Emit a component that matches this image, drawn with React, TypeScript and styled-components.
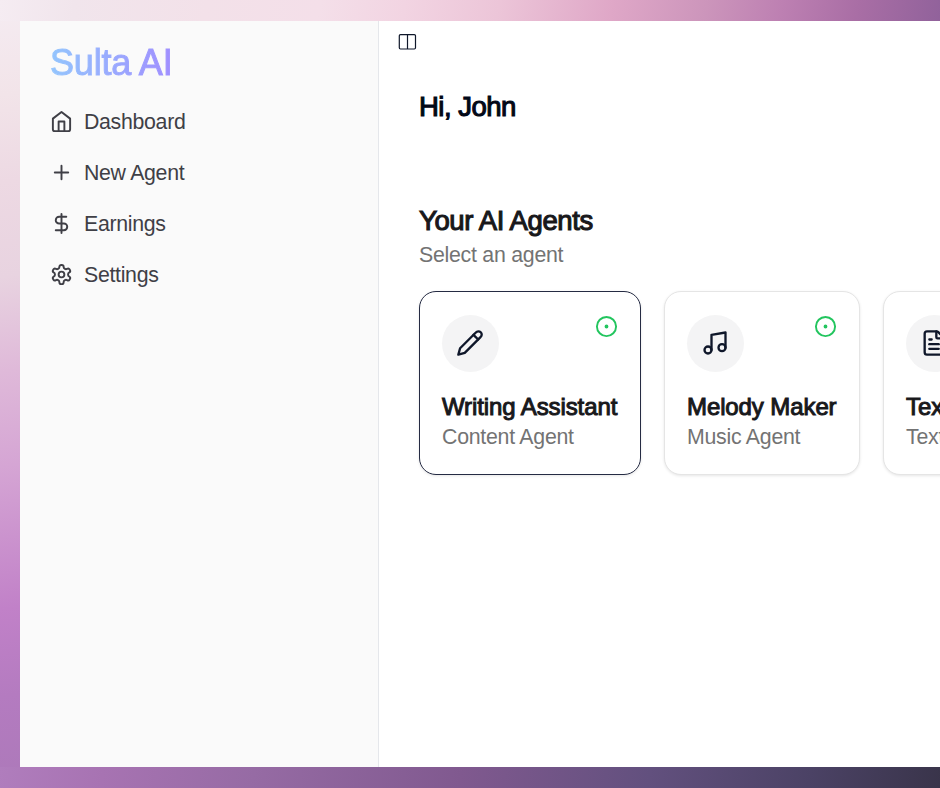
import React from "react";
import styled, { createGlobalStyle } from "styled-components";
import { Plus, DollarSign, Music, FileText, CircleDot } from "lucide-react";

const GlobalStyle = createGlobalStyle`
  * { box-sizing: border-box; }
  html, body { margin: 0; overflow: hidden; }
  body { font-family: "Liberation Sans", Arial, sans-serif; }
  h1, h2, h3, p { margin: 0; font-weight: 400; }
  svg { display: block; flex-shrink: 0; }
`;

const Backdrop = styled.div`
  width: 100vw;
  height: 788px;
  padding: 21px 0 21px 20px;
  background:
    linear-gradient(100deg, #f5ecf2 0%, #f1e5ec 8%, #f3e1e9 22%, #f4dfe9 34%, #f2d4e2 43%, #ecc5d8 53%, #dfa7c7 65%, #cc95bb 75%, #bd80b2 83%, #a96ea5 91%, #91629b 100%) top / 100% 21px no-repeat,
    linear-gradient(100deg, #b07dbd 0%, #a773b2 11%, #966ba4 27%, #80598f 49%, #62507e 69%, #4b4265 86%, #39344a 100%) bottom / 100% 21px no-repeat,
    linear-gradient(172deg, #f5ecf2 0%, #f2e4e9 12%, #edd9e3 23%, #e8d3e0 35%, #dfb9d9 47%, #d5a5d4 59%, #c181c8 77%, #b47bc0 88%, #ac79b9 100%) left / 24px 100% no-repeat;
`;
const Window = styled.div`
  display: flex;
  height: 746px;
  overflow: hidden;
  background: #fff;
`;
const Sidebar = styled.aside`
  width: 359px;
  flex-shrink: 0;
  padding: 18px 30px;
  background: #fafafa;
  border-right: 1px solid #e5e7eb;
`;
const Brand = styled.h1`
  width: max-content;
  font-size: 36px;
  line-height: 48px;
  letter-spacing: -0.2px;
  color: transparent;
  background: linear-gradient(90deg, #93c5fd, #a08fff);
  background-clip: text;
  -webkit-text-stroke: 1px transparent;
`;
const Nav = styled.nav`
  display: flex;
  flex-direction: column;
  margin-top: 9px;
`;
const NavItem = styled.a`
  display: flex;
  align-items: center;
  gap: 11px;
  height: 51px;
  color: #3f3f46;
  font-size: 21.3px;
  letter-spacing: -0.3px;
`;
const NavIcon = styled.span`
  display: flex;
  width: 23px;
`;
const NavLabel = styled.span`
  padding-top: 2px;
`;
const Main = styled.main`
  flex: 1;
  min-width: 0;
  overflow: hidden;
  padding: 10px 0 0 18px;
  color: #0f172a;
`;
const Content = styled.div`
  padding: 34px 0 0 22px;
`;
const Heading = styled.h2<{ $greeting?: boolean }>`
  font-size: 27.5px;
  line-height: 40px;
  letter-spacing: ${(p) => (p.$greeting ? "-0.5px" : "-0.4px")};
  color: ${(p) => (p.$greeting ? "#020817" : "#18181b")};
  -webkit-text-stroke: 1.1px currentColor;
  margin-bottom: ${(p) => (p.$greeting ? "74px" : "0")};
`;
const Muted = styled.p`
  font-size: 21.3px;
  line-height: 28px;
  letter-spacing: -0.25px;
  color: #737373;
`;
const CardRow = styled.div`
  display: flex;
  gap: 23px;
  width: max-content;
  margin-top: 22px;
`;
const Card = styled.article<{ $selected?: boolean; $width: number }>`
  width: ${(p) => p.$width}px;
  height: 184px;
  padding: 23px 22px;
  background: #fff;
  border: 1px solid ${(p) => (p.$selected ? "#252b43" : "#e5e5e5")};
  border-radius: 17px;
  box-shadow: 0 1px 3px rgba(0, 0, 0, 0.1);
`;
const CardTop = styled.div`
  display: flex;
  justify-content: space-between;
  align-items: flex-start;
`;
const IconDisc = styled.div`
  display: flex;
  align-items: center;
  justify-content: center;
  width: 57px;
  height: 57px;
  padding: 0 1px 1px 0;
  border-radius: 50%;
  background: #f4f4f5;
  color: #0f172a;
`;
const CardTitle = styled.h3`
  margin: 20px 0 1px;
  font-size: 24px;
  line-height: 30px;
  letter-spacing: -0.1px;
  white-space: nowrap;
  color: #18181b;
  -webkit-text-stroke: 1px currentColor;
`;

function OutlineIcon({ size, children }: { size: number; children: React.ReactNode }) {
  return (
    <svg width={size} height={size} viewBox="0 0 24 24" fill="none" stroke="currentColor" strokeWidth="2" strokeLinecap="round" strokeLinejoin="round">
      {children}
    </svg>
  );
}

function HomeIcon() {
  return (
    <OutlineIcon size={23}>
      <path d="m3 9 9-7 9 7v11a2 2 0 0 1-2 2H5a2 2 0 0 1-2-2z" />
      <path d="M9 22V12h6v10" />
    </OutlineIcon>
  );
}

function GearIcon() {
  return (
    <OutlineIcon size={23}>
      <path d="M12.22 2h-.44a2 2 0 0 0-2 2v.18a2 2 0 0 1-1 1.73l-.43.25a2 2 0 0 1-2 0l-.15-.08a2 2 0 0 0-2.73.73l-.22.38a2 2 0 0 0 .73 2.73l.15.1a2 2 0 0 1 1 1.72v.51a2 2 0 0 1-1 1.74l-.15.09a2 2 0 0 0-.73 2.73l.22.38a2 2 0 0 0 2.73.73l.15-.08a2 2 0 0 1 2 0l.43.25a2 2 0 0 1 1 1.73V20a2 2 0 0 0 2 2h.44a2 2 0 0 0 2-2v-.18a2 2 0 0 1 1-1.73l.43-.25a2 2 0 0 1 2 0l.15.08a2 2 0 0 0 2.73-.73l.22-.39a2 2 0 0 0-.73-2.73l-.15-.08a2 2 0 0 1-1-1.74v-.5a2 2 0 0 1 1-1.74l.15-.09a2 2 0 0 0 .73-2.73l-.22-.38a2 2 0 0 0-2.73-.73l-.15.08a2 2 0 0 1-2 0l-.43-.25a2 2 0 0 1-1-1.73V4a2 2 0 0 0-2-2z" />
      <circle cx="12" cy="12" r="3" />
    </OutlineIcon>
  );
}

function PencilIcon() {
  return (
    <OutlineIcon size={28}>
      <path d="M17 3a2.85 2.83 0 1 1 4 4L7.5 20.5 2 22l1.5-5.5Z" />
      <path d="m15 5 4 4" />
    </OutlineIcon>
  );
}

function PanelIcon() {
  return (
    <svg width="21" height="22" viewBox="0 0 21 22" fill="none" stroke="currentColor" strokeWidth="1.2">
      <rect x="2.3" y="3.6" width="16.2" height="14.4" rx="1.2" />
      <path d="M10.5 3.6V18" />
    </svg>
  );
}

const links = [
  { label: "Dashboard", icon: <HomeIcon /> },
  { label: "New Agent", icon: <Plus size={23} /> },
  { label: "Earnings", icon: <DollarSign size={23} /> },
  { label: "Settings", icon: <GearIcon /> },
];
const agents = [
  { name: "Writing Assistant", type: "Content Agent", icon: <PencilIcon />, width: 222 },
  { name: "Melody Maker", type: "Music Agent", icon: <Music size={28} />, width: 196 },
  { name: "Text Summarizer", type: "Text Agent", icon: <FileText size={28} />, width: 223 },
];

export default function App() {
  return (
    <Backdrop>
      <GlobalStyle />
      <Window>
        <Sidebar>
          <Brand>Sulta AI</Brand>
          <Nav>
            {links.map((link) => (
              <NavItem key={link.label}>
                <NavIcon>{link.icon}</NavIcon>
                <NavLabel>{link.label}</NavLabel>
              </NavItem>
            ))}
          </Nav>
        </Sidebar>
        <Main>
          <PanelIcon />
          <Content>
            <Heading $greeting>Hi, John</Heading>
            <Heading>Your AI Agents</Heading>
            <Muted>Select an agent</Muted>
            <CardRow>
              {agents.map((agent, index) => (
                <Card key={agent.name} $selected={index === 0} $width={agent.width}>
                  <CardTop>
                    <IconDisc>{agent.icon}</IconDisc>
                    <CircleDot size={23} color="#22c55e" strokeWidth={2} />
                  </CardTop>
                  <CardTitle>{agent.name}</CardTitle>
                  <Muted>{agent.type}</Muted>
                </Card>
              ))}
            </CardRow>
          </Content>
        </Main>
      </Window>
    </Backdrop>
  );
}
